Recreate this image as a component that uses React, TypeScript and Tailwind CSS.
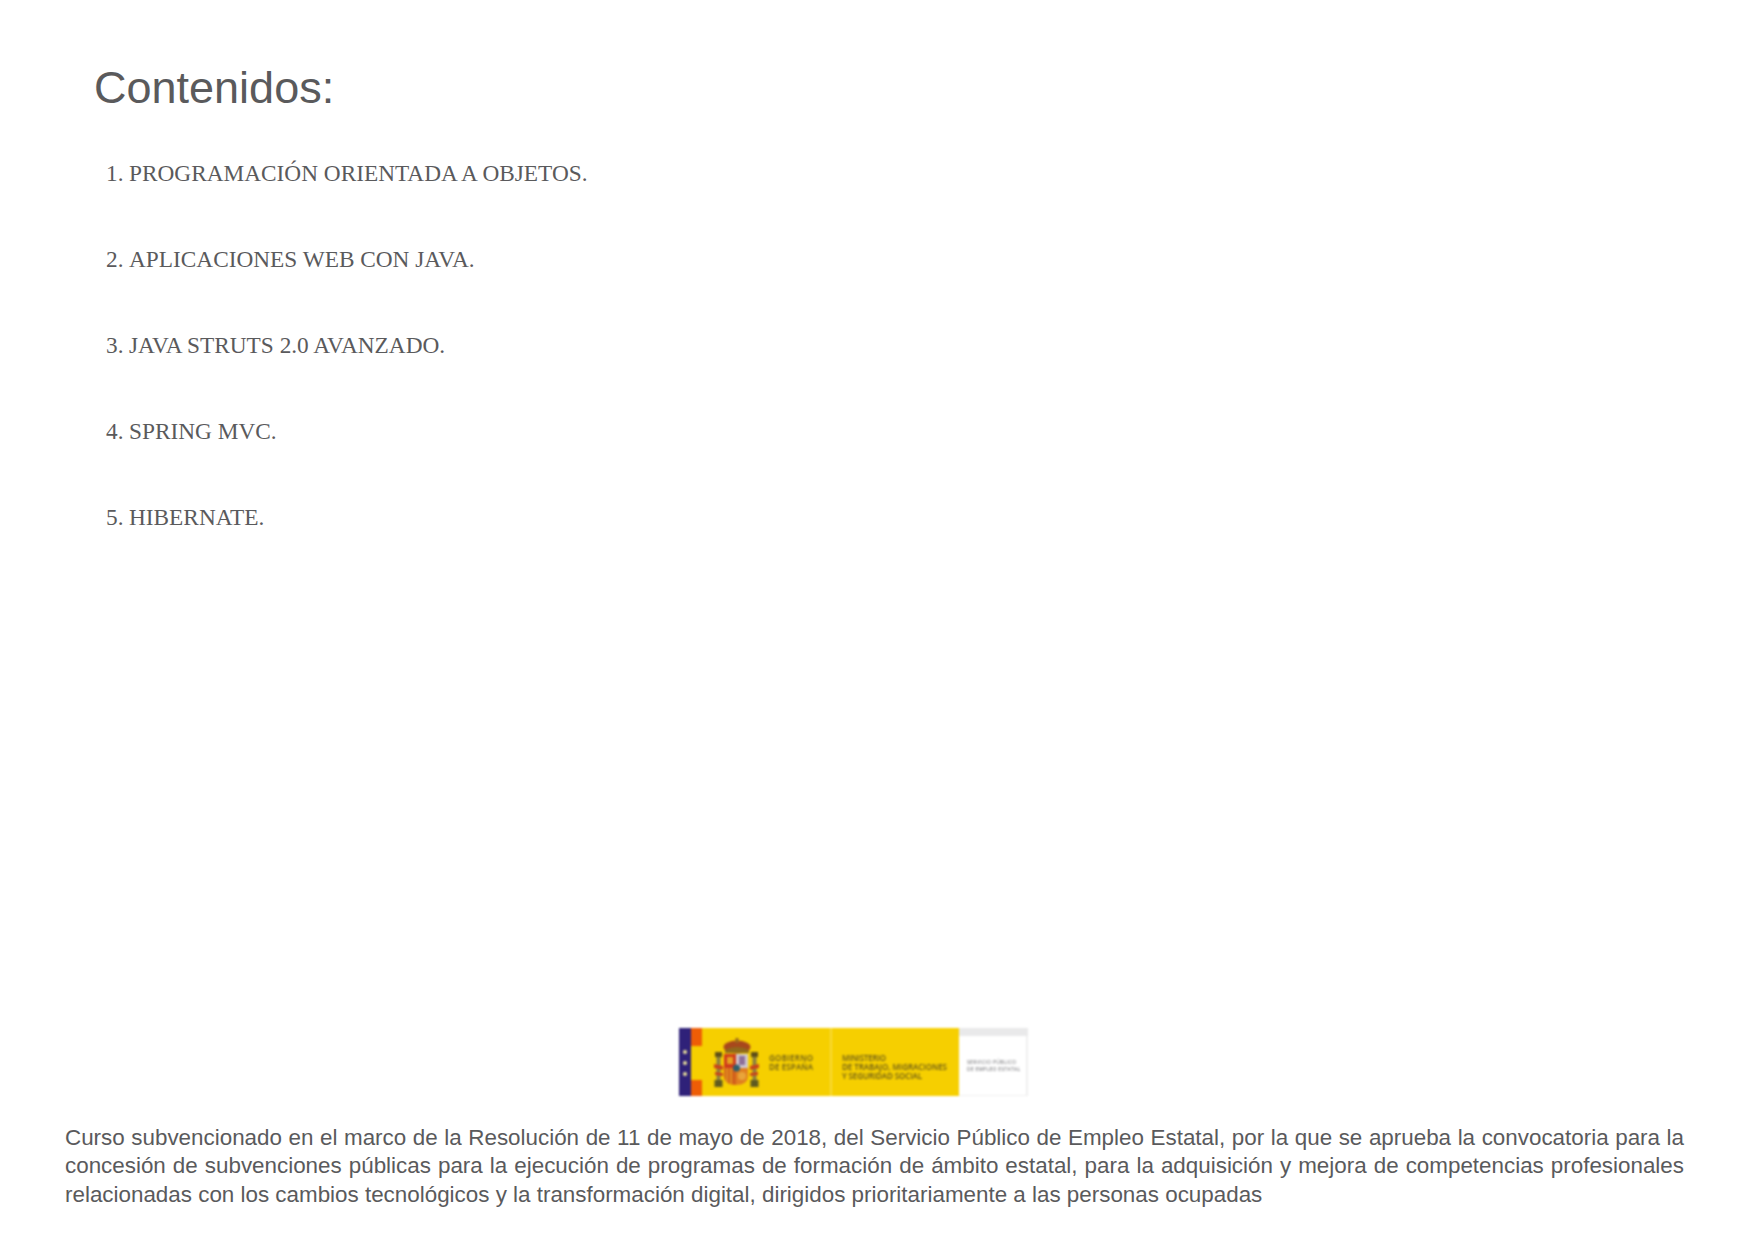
import React from 'react';

const items = [
  'PROGRAMACIÓN ORIENTADA A OBJETOS.',
  'APLICACIONES WEB CON JAVA.',
  'JAVA STRUTS 2.0 AVANZADO.',
  'SPRING MVC.',
  'HIBERNATE.',
];

// logo of the ministry, blurry in the reference as well
function GovernmentLogo() {
  return (
    <svg width="349" height="68" viewBox="0 0 349 68" className="blur-[0.8px]">
      <rect width="349" height="68" fill="#fff" />
      <rect x="12" width="268" height="68" fill="#f6cf00" />
      <rect x="151" width="2" height="68" fill="#f8da3a" />
      <rect width="12" height="68" fill="#2f2179" />
      <rect x="12" width="11" height="18" fill="#ee5d06" />
      <rect x="12" y="52" width="11" height="16" fill="#ee5d06" />
      <circle cx="6" cy="24" r="2" fill="#efe69a" />
      <circle cx="6" cy="35" r="2" fill="#efe69a" />
      <circle cx="6" cy="46" r="2" fill="#efe69a" />

      {/* coat of arms */}
      <ellipse cx="58" cy="19" rx="13.5" ry="6.5" fill="#a8481c" />
      <path d="M46 22q12-6 24 0v3H46z" fill="#8f6a1c" />
      <rect x="56.5" y="10" width="3" height="5" fill="#9a6a1c" />
      <path d="M45 26h12v14H45z" fill="#cf3a1c" />
      <rect x="48" y="29" width="6" height="7" fill="#e8a020" />
      <path d="M57 26h12v14H57z" fill="#cfc8d0" />
      <rect x="60" y="28" width="6" height="9" fill="#8d6f98" />
      <path d="M45 40h12v17c-7 0-12-3-12-9z" fill="#d2601c" />
      <path d="M48 40v15M52 40v16" stroke="#e8a020" strokeWidth="1.5" />
      <path d="M57 40h12v8c0 6-5 9-12 9z" fill="#e07f20" />
      <circle cx="63" cy="48" r="4" fill="#e9a53a" />
      <circle cx="57.5" cy="40" r="3.5" fill="#2f5f6d" />
      <rect x="36" y="24" width="7" height="5" fill="#5f4f18" />
      <rect x="37.5" y="29" width="4" height="23" fill="#8a8040" />
      <rect x="35.5" y="52" width="8" height="7" fill="#5f5a20" />
      <rect x="72" y="24" width="7" height="5" fill="#5f4f18" />
      <rect x="73.5" y="29" width="4" height="23" fill="#8a8040" />
      <rect x="71.5" y="52" width="8" height="7" fill="#5f5a20" />
      <path d="M35 36l9 2v4l-9-2zM36 44l8 1v3l-8-1z" fill="#c9421c" />
      <path d="M80 36l-9 2v4l9-2zM79 44l-8 1v3l8-1z" fill="#c9421c" />

      <g fill="#6a5a18" fontFamily="'Open Sans', sans-serif" fontSize="8" fontWeight="600">
        <text x="90" y="33" textLength="44">GOBIERNO</text>
        <text x="90" y="42" textLength="44">DE ESPAÑA</text>
        <text x="163" y="33" textLength="44">MINISTERIO</text>
        <text x="163" y="42" textLength="105">DE TRABAJO, MIGRACIONES</text>
        <text x="163" y="51" textLength="80">Y SEGURIDAD SOCIAL</text>
      </g>
      <g fill="#66666a" fontFamily="'Open Sans', sans-serif" fontSize="5">
        <text x="288" y="36" textLength="49">SERVICIO PÚBLICO</text>
        <text x="288" y="43" textLength="53">DE EMPLEO ESTATAL</text>
      </g>

      <rect x="280" width="69" height="8" fill="#e9e9ea" />
      <rect x="347" y="8" width="2" height="60" fill="#efefef" />
      <rect x="280" y="67" width="69" height="1" fill="#efefef" />
    </svg>
  );
}

export default function App() {
  return (
    <div className="h-[1241px] bg-white flex flex-col font-['Liberation_Sans',sans-serif] text-[#5a5a5c]">
      {/* Slide body */}
      <main className="pl-[94px] pt-[58px]">
        <h1 className="text-[45px] leading-[60px] font-normal">Contenidos:</h1>
        <ol className="mt-[38px] flex flex-col gap-[52px] pl-[12px] font-['Liberation_Serif',serif] text-[23.3px] leading-[34px]">
          {items.map((item, i) => (
            <li key={item} className="flex">
              <span className="w-[23px]">{i + 1}.</span>
              <span>{item}</span>
            </li>
          ))}
        </ol>
      </main>

      {/* Footer */}
      <footer className="mt-auto pb-[32px] pl-[65px] flex flex-col">
        <div className="ml-[614px]">
          <GovernmentLogo />
        </div>
        <p className="mt-[28px] text-[22.4px] leading-[28.5px] text-justify w-[1619px]">
          Curso subvencionado en el marco de la Resolución de 11 de mayo de 2018, del Servicio Público de Empleo Estatal, por la que se aprueba la convocatoria para la concesión de subvenciones públicas para la ejecución de programas de formación de ámbito estatal, para la adquisición y mejora de competencias profesionales relacionadas con los cambios tecnológicos y la transformación digital, dirigidos prioritariamente a las personas ocupadas
        </p>
      </footer>
    </div>
  );
}
